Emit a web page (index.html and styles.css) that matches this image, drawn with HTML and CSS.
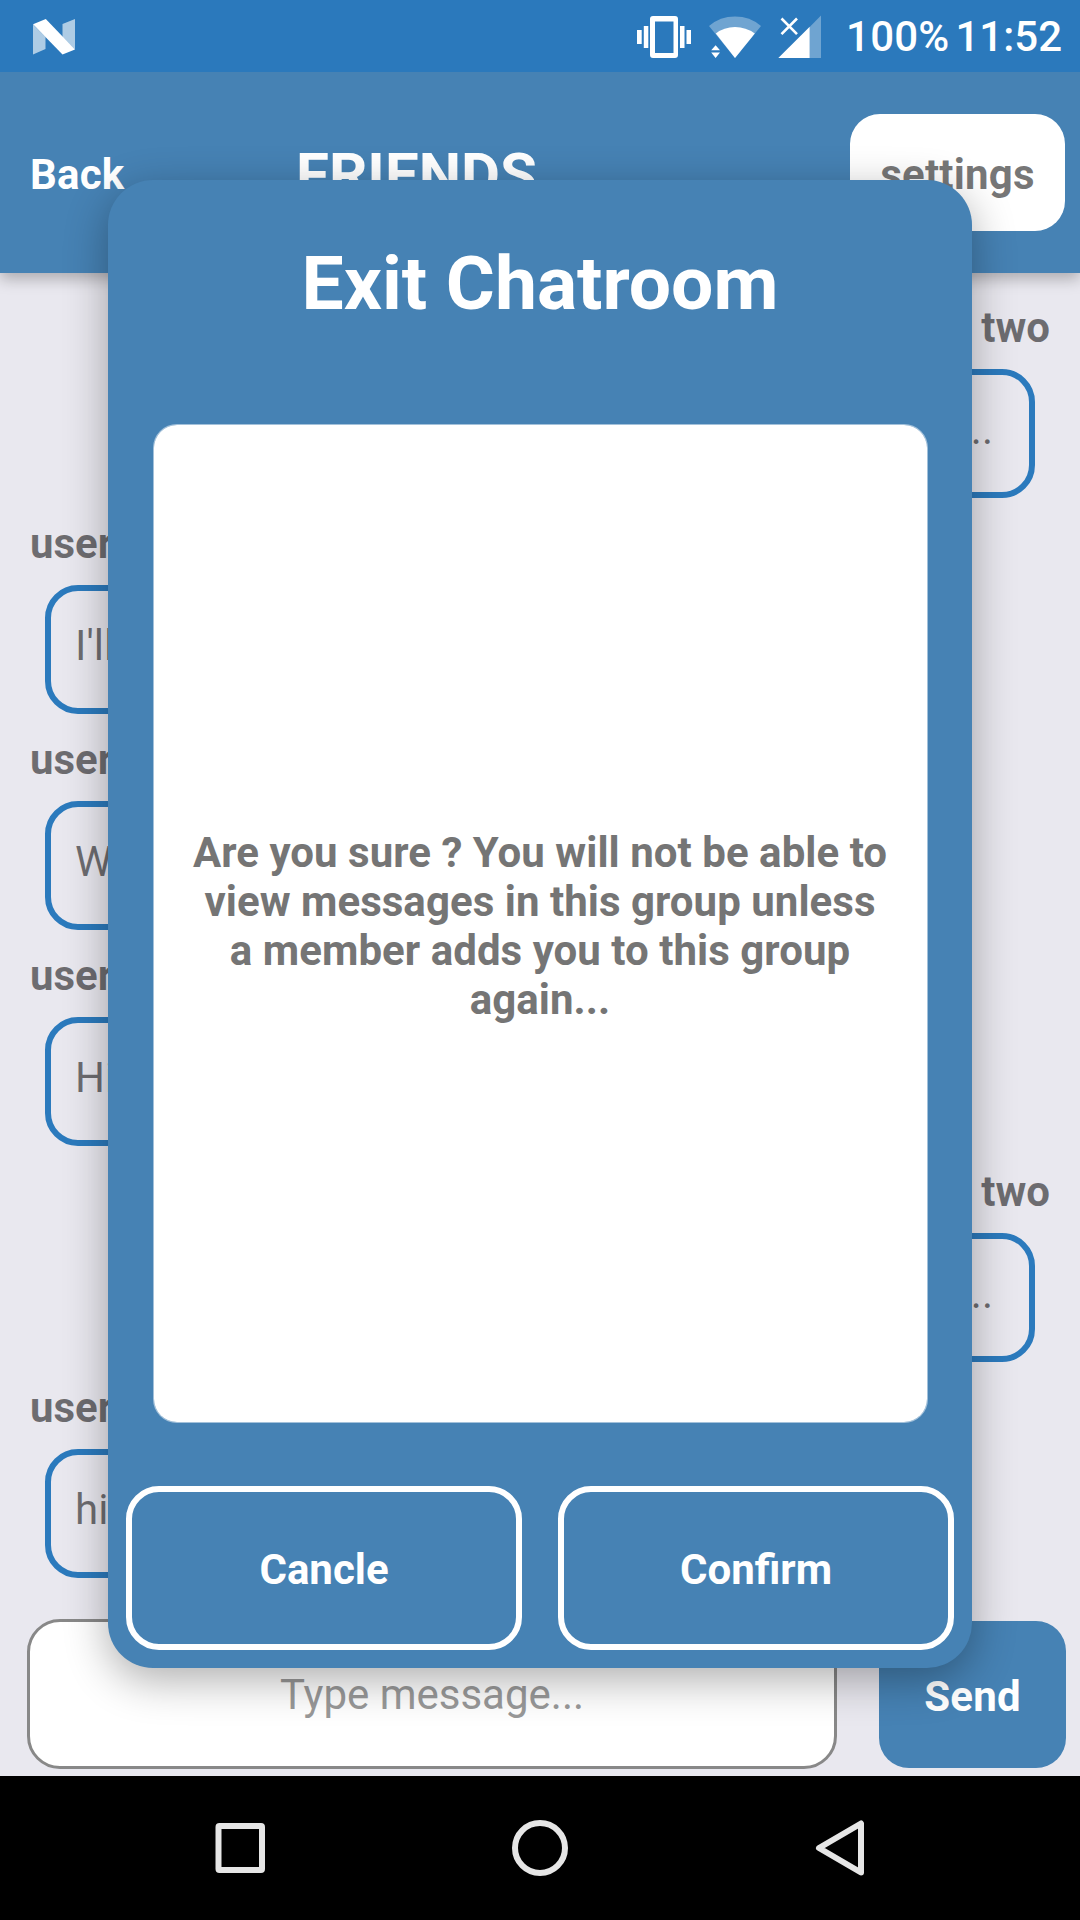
FILE: index.html
```html
<!DOCTYPE html>
<html lang="en">
<head>
<meta charset="utf-8">
<title>Exit Chatroom</title>
<link rel="stylesheet" href="styles.css">
</head>
<body>
<div class="screen">
  <div class="status-bar">
    <svg class="status-logo" width="42" height="36" viewBox="0 0 42 36">
      <path d="M0 5.500 12.500 18v12L0 35.500zM29.500 5 42 0v30.500L29.500 18z" fill="#fff" fill-opacity=".62"/>
      <path d="M0 5.300 12.800 0 42 30.500 29.500 35.500z" fill="#fff"/>
    </svg>
    <svg class="status-icons" width="186" height="44" viewBox="636 14 186 44">
      <g fill="#fff">
        <path fill-rule="evenodd" d="M653 15h22a3 3 0 0 1 3 3v36a3 3 0 0 1-3 3h-22a3 3 0 0 1-3-3V18a3 3 0 0 1 3-3zM655 20.500v31.500h18.500V20.500z"/>
        <path d="M643.800 25h4.500v22h-4.500zM637 29h4.700v14H637zM680 25h4.500v22H680zM686.500 29h4.500v14h-4.500z"/>
        <path fill-opacity=".32" d="M709 25Q720 15.600 735 15.600T761 25L735 57z"/>
        <path d="M715.800 32.500Q724 26 735 26T754.800 32.500L735 57z"/>
        <path d="M711.200 49.200 715.600 44.200 720 49.200zM711.200 51.500 715.600 57 720 51.500z"/>
        <path fill-opacity=".32" d="M809.700 26 821 14.500V57H809.700z"/>
        <path d="M778.300 57 809.700 25.700V57z"/>
      </g>
      <path d="M781.500 17.500 797 33.200M797 17.500 781.500 33.200" stroke="#fff" stroke-width="2.600"/>
    </svg>
    <span class="battery">100%</span>
    <span class="clock">11:52</span>
  </div>

  <header class="header">
    <span class="back">Back</span>
    <h1 class="room">FRIENDS</h1>
    <span class="settings">settings</span>
  </header>

  <main class="messages">
    <div class="message mine"><span class="author">user two</span><p class="bubble">Hello..</p></div>
    <div class="message"><span class="author">user one</span><p class="bubble">I'll be</p></div>
    <div class="message"><span class="author">user one</span><p class="bubble">Wow</p></div>
    <div class="message"><span class="author">user one</span><p class="bubble">Hi</p></div>
    <div class="message mine"><span class="author">user two</span><p class="bubble">Hello..</p></div>
    <div class="message"><span class="author">user one</span><p class="bubble">hi</p></div>
  </main>

  <div class="composer">
    <div class="input">Type message...</div>
    <div class="send">Send</div>
  </div>

  <nav class="nav-bar">
    <svg width="648" height="56" viewBox="216 1820 648 56" fill="none" stroke="#e6e6e6" stroke-width="6" stroke-linejoin="round">
      <rect x="218.500" y="1826" width="43.500" height="44" rx="1"/>
      <circle cx="540" cy="1848" r="25"/>
      <path d="M861 1823.500V1872.500L819 1848z"/>
    </svg>
  </nav>

  <section class="dialog">
    <h2 class="dialog-title">Exit Chatroom</h2>
    <div class="dialog-body"><p>Are you sure ? You will not be able to view messages in this group unless a member adds you to this group again...</p></div>
    <div class="dialog-actions">
      <div class="action">Cancle</div>
      <div class="action">Confirm</div>
    </div>
  </section>
</div>
</body>
</html>
```
FILE: styles.css
```css
* { box-sizing: border-box; }
body { margin: 0; font-family: Roboto, sans-serif; font-size: 42px; line-height: 49px; }
h1, h2, p { margin: 0; }
svg { display: block; flex: none; overflow: visible; }

.screen {
  position: relative;
  display: flex;
  flex-direction: column;
  width: 1080px;
  height: 1920px;
  overflow: hidden;
  background: #e9e8ef;
  color: rgba(0, 0, 0, .54);
}

.status-bar {
  position: relative;
  z-index: 1;
  display: flex;
  align-items: center;
  height: 72px;
  padding: 1px 18px 0 33px;
  background: #2b79bc;
  color: #fff;
  font-weight: 500;
}
.status-icons { margin-left: auto; }
.battery { margin-left: 24px; letter-spacing: .2px; }
.clock { margin-left: 6px; }

.header {
  position: relative;
  display: flex;
  align-items: center;
  height: 201px;
  padding: 0 15px 0 30px;
  background: #4682b4;
  color: #fff;
  font-weight: 700;
  letter-spacing: .2px;
  box-shadow: 0 6px 14px rgba(0, 0, 0, .26);
}
.back { width: 266px; padding-top: 3px; }
.room { padding-top: 4px; font-size: 60px; line-height: 70px; letter-spacing: 0; }
.settings {
  width: 215px;
  margin-left: auto;
  padding: 36px 0 32px;
  border-radius: 30px;
  background: #fff;
  color: rgba(0, 0, 0, .54);
  text-align: center;
}

.messages { height: 1345px; padding: 30px 30px 0; }
.message {
  display: flex;
  flex-direction: column;
  align-items: flex-start;
  gap: 17px;
  margin-bottom: 21px;
}
.author { font-weight: 700; }
.bubble {
  height: 129px;
  margin: 0 15px;
  padding: 30px 36px 0 24px;
  border: 6px solid #2b7abd;
  border-radius: 33px;
}
.mine { align-items: flex-end; }

.composer {
  display: flex;
  align-items: center;
  justify-content: space-between;
  height: 158px;
  padding: 1px 14px 7px 27px;
}
.input {
  width: 810px;
  height: 150px;
  padding-top: 48px;
  border: 3px solid #888;
  border-radius: 33px;
  background: #fff;
  color: #999;
  text-align: center;
}
.send {
  width: 187px;
  padding: 51px 0 47px;
  border-radius: 30px;
  background: #4682b4;
  color: #fff;
  font-weight: 700;
  letter-spacing: .2px;
  text-align: center;
}

.nav-bar {
  display: flex;
  align-items: center;
  justify-content: center;
  height: 144px;
  background: #000;
}

.dialog {
  position: absolute;
  top: 180px;
  left: 108px;
  display: flex;
  flex-direction: column;
  width: 864px;
  height: 1488px;
  padding: 59px 18px 18px;
  border-radius: 45px;
  background: #4682b4;
  color: #fff;
  font-weight: 700;
  text-align: center;
  box-shadow: 0 12px 44px rgba(0, 0, 0, .32);
}
.dialog-title { font-size: 75px; line-height: 88px; }
.dialog-body {
  display: flex;
  align-items: center;
  height: 999px;
  margin: 97px 26px 63px 27px;
  padding: 5px 36px 0 35px;
  border: 1px solid rgba(255, 255, 255, .5);
  border-radius: 24px;
  background: #fff;
  background-clip: padding-box;
  color: #757575;
  letter-spacing: .04px;
}
.dialog-actions { display: flex; gap: 36px; }
.action {
  flex: 1;
  padding: 53px 0 50px;
  border: 6px solid #fff;
  border-radius: 33px;
}
```
